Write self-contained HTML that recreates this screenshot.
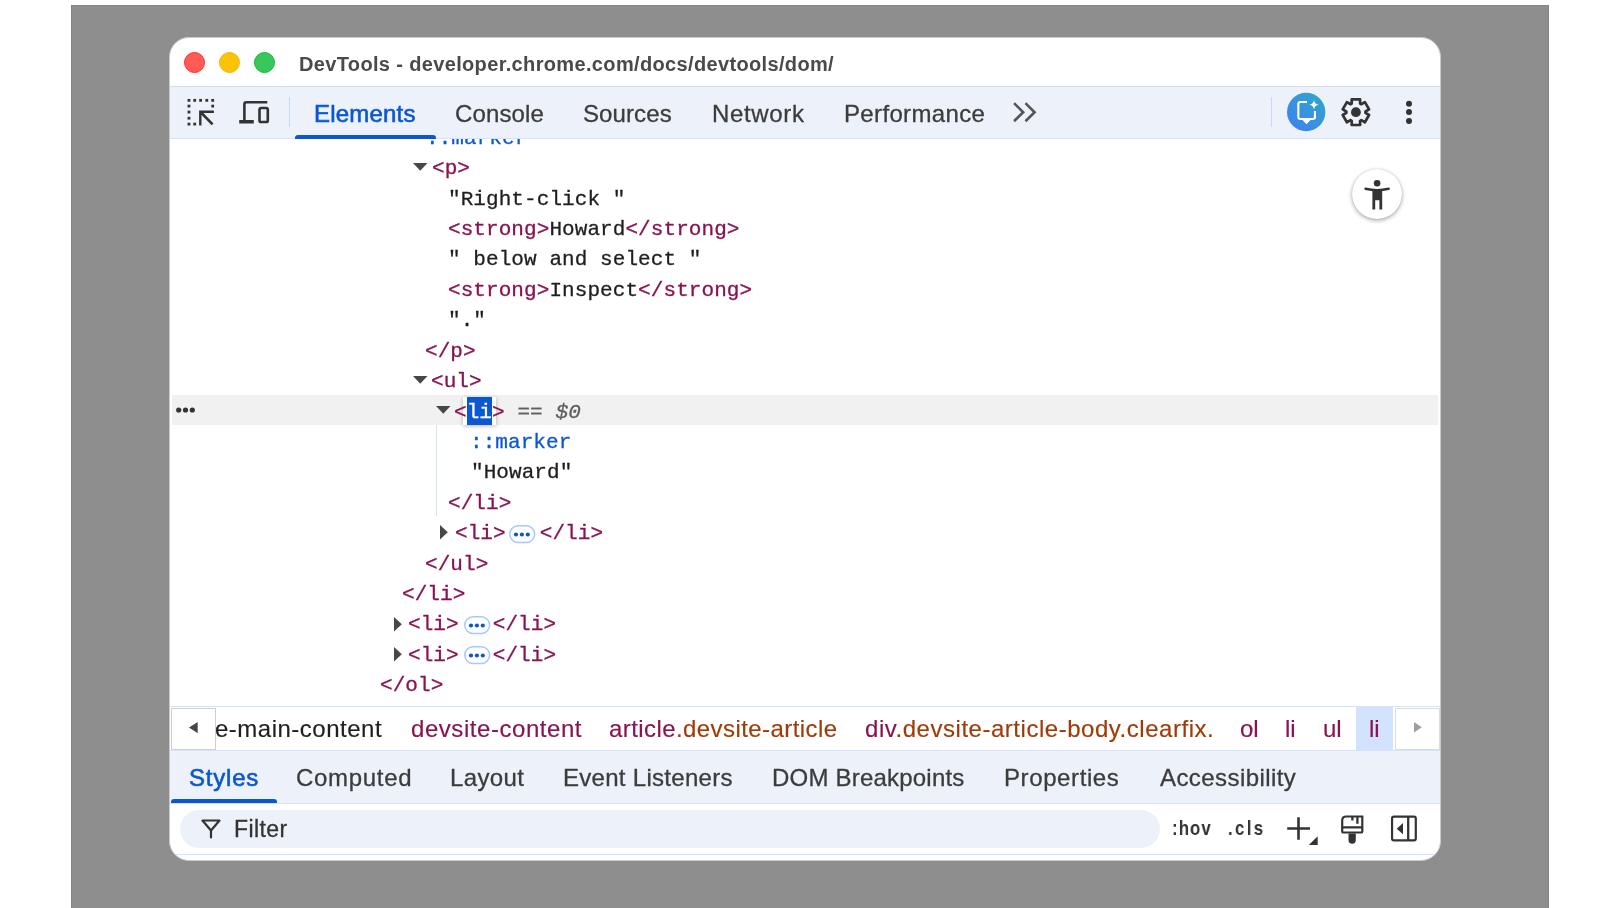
<!DOCTYPE html><html><head><meta charset="utf-8"><style>*{box-sizing:border-box;margin:0;padding:0}
html,body{width:1600px;height:908px;overflow:hidden;background:#fff;font-family:"Liberation Sans",sans-serif}
.a{position:absolute}
.t{position:absolute;white-space:pre;line-height:30px;height:30px;will-change:transform}
#bg{left:71px;top:5px;width:1478px;height:903px;background:#8e8e8e;border:1px solid #858585;border-bottom:none}
#win{left:169px;top:37px;width:1272px;height:824px;background:#fff;border:1px solid #c9c9c9;border-radius:20px}
.title{font-weight:bold;color:#4a4a4a}
.mono{font-family:"Liberation Mono",monospace;letter-spacing:0.07px;color:#1f1f1f;-webkit-text-stroke:0.3px currentColor}
.tag{color:#881350}
.blue{color:#0b57d0}
.tab{color:#3c3c3c;-webkit-text-stroke:0.3px currentColor}
.act{color:#0b57d0;-webkit-text-stroke:0.6px currentColor}
.bc{color:#881350;-webkit-text-stroke:0.15px currentColor}
.br{color:#9e3b06}
.eq{color:#5f5f5f}
.sel{color:#fff}
.pill{display:inline-block;width:34px}
.hov{font-weight:bold;color:#333}
</style></head><body>
<div id="bg" class="a"></div>
<div id="win" class="a"></div>
<div class="a" style="left:170px;top:86px;width:1270px;height:1px;background:#dcdcdc"></div>
<div class="a" style="left:170px;top:87px;width:1270px;height:51px;background:#edf2fa"></div>
<div class="a" style="left:170px;top:138px;width:1270px;height:1px;background:#d3e3fd"></div>
<div class="a" style="left:184.1px;top:51.9px;width:21.2px;height:21.2px;border-radius:50%;background:#ff5b57;border:1px solid #fe2b2b"></div>
<div class="a" style="left:219.1px;top:51.9px;width:21.2px;height:21.2px;border-radius:50%;background:#f9c306;border:1px solid #f5b800"></div>
<div class="a" style="left:254.2px;top:51.9px;width:21.2px;height:21.2px;border-radius:50%;background:#38c75a;border:1px solid #12b833"></div>
<div class="t title" style="left:299.0px;top:48.5px;font-size:20px;letter-spacing:0.35px">DevTools - developer.chrome.com/docs/devtools/dom/</div>
<div class="a" style="left:172px;top:394.5px;width:1266px;height:30.4px;background:#f1f1f1"></div>
<div class="a" style="left:463px;top:397.3px;width:33px;height:27.3px;background:#fff;box-shadow:0 1px 4px rgba(0,0,0,0.28)"></div>
<div class="a" style="left:467px;top:397px;width:25px;height:27.8px;background:#0b57d0"></div>
<div class="t mono" style="left:425.5px;top:123.7px;font-size:21px;"><span class="blue">::marker</span></div>
<div class="t mono" style="left:432.0px;top:154.1px;font-size:21px;"><span class="tag">&lt;p&gt;</span></div>
<div class="t mono" style="left:447.5px;top:184.5px;font-size:21px;">"Right-click "</div>
<div class="t mono" style="left:447.5px;top:214.9px;font-size:21px;"><span class="tag">&lt;strong&gt;</span>Howard<span class="tag">&lt;/strong&gt;</span></div>
<div class="t mono" style="left:447.5px;top:245.4px;font-size:21px;">" below and select "</div>
<div class="t mono" style="left:447.5px;top:275.8px;font-size:21px;"><span class="tag">&lt;strong&gt;</span>Inspect<span class="tag">&lt;/strong&gt;</span></div>
<div class="t mono" style="left:447.5px;top:306.2px;font-size:21px;">"."</div>
<div class="t mono" style="left:425.0px;top:336.6px;font-size:21px;"><span class="tag">&lt;/p&gt;</span></div>
<div class="t mono" style="left:430.5px;top:367.0px;font-size:21px;"><span class="tag">&lt;ul&gt;</span></div>
<div class="t mono" style="left:453.5px;top:397.5px;font-size:21px;"><span class="tag">&lt;<span class="sel">li</span>&gt;</span> <span class="eq">==</span> <span class="eq"><i>$0</i></span></div>
<div class="t mono" style="left:469.5px;top:427.9px;font-size:21px;"><span class="blue">::marker</span></div>
<div class="t mono" style="left:471.0px;top:458.3px;font-size:21px;">"Howard"</div>
<div class="t mono" style="left:447.5px;top:488.7px;font-size:21px;"><span class="tag">&lt;/li&gt;</span></div>
<div class="t mono" style="left:454.5px;top:519.1px;font-size:21px;"><span class="tag">&lt;li&gt;</span><span class="pill"></span><span class="tag">&lt;/li&gt;</span></div>
<div class="t mono" style="left:425.0px;top:549.6px;font-size:21px;"><span class="tag">&lt;/ul&gt;</span></div>
<div class="t mono" style="left:402.0px;top:580.0px;font-size:21px;"><span class="tag">&lt;/li&gt;</span></div>
<div class="t mono" style="left:408.0px;top:610.4px;font-size:21px;"><span class="tag">&lt;li&gt;</span><span class="pill"></span><span class="tag">&lt;/li&gt;</span></div>
<div class="t mono" style="left:408.0px;top:640.8px;font-size:21px;"><span class="tag">&lt;li&gt;</span><span class="pill"></span><span class="tag">&lt;/li&gt;</span></div>
<div class="t mono" style="left:379.5px;top:671.2px;font-size:21px;"><span class="tag">&lt;/ol&gt;</span></div>
<svg class="a" style="left:413.3px;top:162.5px" width="15" height="8"><path d="M0 0H14.5L7.25 7.8Z" fill="#474747"/></svg>
<svg class="a" style="left:413.3px;top:376.2px" width="15" height="8"><path d="M0 0H14.5L7.25 7.8Z" fill="#474747"/></svg>
<svg class="a" style="left:436.2px;top:406px" width="15" height="8"><path d="M0 0H14.5L7.25 7.8Z" fill="#474747"/></svg>
<svg class="a" style="left:439.5px;top:525px" width="8" height="15"><path d="M0 0V14.5L7.8 7.25Z" fill="#474747"/></svg>
<svg class="a" style="left:393.6px;top:616.5px" width="8" height="15"><path d="M0 0V14.5L7.8 7.25Z" fill="#474747"/></svg>
<svg class="a" style="left:393.6px;top:647px" width="8" height="15"><path d="M0 0V14.5L7.8 7.25Z" fill="#474747"/></svg>
<div class="a" style="left:436px;top:425px;width:1px;height:91px;background:#d3e3fd"></div>
<svg class="a" style="left:175px;top:406px" width="22" height="8"><circle cx="3.7" cy="4" r="2.6" fill="#333"/><circle cx="10.5" cy="4" r="2.6" fill="#333"/><circle cx="17.3" cy="4" r="2.6" fill="#333"/></svg>
<div class="a" style="left:170px;top:706px;width:1270px;height:1px;background:#d3e3fd"></div>
<div class="a" style="left:170px;top:750px;width:1270px;height:1px;background:#d3e3fd"></div>
<div class="a" style="left:1356px;top:707px;width:37px;height:43px;background:#d3e3fd"></div>
<div class="t bc" style="left:214.5px;top:713.7px;font-size:24px;color:#1f1f1f;letter-spacing:0.5px">e-main-content</div>
<div class="t bc" style="left:410.5px;top:713.7px;font-size:24px;letter-spacing:0.55px">devsite-content</div>
<div class="t bc" style="left:608.5px;top:713.7px;font-size:24px;letter-spacing:0.42px">article<span class="br">.devsite-article</span></div>
<div class="t bc" style="left:864.5px;top:713.7px;font-size:24px;letter-spacing:0.53px">div<span class="br">.devsite-article-body.clearfix.</span></div>
<div class="t bc" style="left:1239.5px;top:713.7px;font-size:24px;">ol</div>
<div class="t bc" style="left:1285.0px;top:713.7px;font-size:24px;">li</div>
<div class="t bc" style="left:1323.0px;top:713.7px;font-size:24px;">ul</div>
<div class="t bc" style="left:1369.0px;top:713.7px;font-size:24px;">li</div>
<div class="a" style="left:171px;top:708px;width:45px;height:42px;background:#fff;border:1px solid #cfcfcf"></div>
<svg class="a" style="left:189px;top:722px" width="9" height="12"><path d="M8.7 0V11.2L0 5.6Z" fill="#474747"/></svg>
<div class="a" style="left:1395px;top:708px;width:45px;height:42px;background:#fff;border:1px solid #dcdcdc"></div>
<svg class="a" style="left:1414px;top:722px" width="9" height="12"><path d="M0 0V10.5L7.8 5.25Z" fill="#9e9e9e"/></svg>
<div class="a" style="left:170px;top:751px;width:1270px;height:52px;background:#edf2fa"></div>
<div class="a" style="left:170px;top:803px;width:1270px;height:1px;background:#d3e3fd"></div>
<div class="t tab act" style="left:189.0px;top:763.2px;font-size:24px;letter-spacing:0.8px">Styles</div>
<div class="t tab" style="left:296.0px;top:763.2px;font-size:24px;letter-spacing:0.7px">Computed</div>
<div class="t tab" style="left:449.5px;top:763.2px;font-size:24px;letter-spacing:0.35px">Layout</div>
<div class="t tab" style="left:562.5px;top:763.2px;font-size:24px;letter-spacing:0.29px">Event Listeners</div>
<div class="t tab" style="left:771.5px;top:763.2px;font-size:24px;letter-spacing:0.21px">DOM Breakpoints</div>
<div class="t tab" style="left:1003.5px;top:763.2px;font-size:24px;letter-spacing:0.6px">Properties</div>
<div class="t tab" style="left:1159.5px;top:763.2px;font-size:24px;letter-spacing:0.42px">Accessibility</div>
<div class="a" style="left:171px;top:799px;width:106px;height:4px;background:#0b57d0;border-radius:3px 3px 0 0"></div>
<div class="a" style="left:180px;top:810px;width:980px;height:37.5px;background:#edf2fa;border-radius:19px"></div>
<div class="a" style="left:176px;top:854px;width:1258px;height:1px;background:#d3e3fd"></div>
<div class="t tab" style="left:233.5px;top:814.0px;font-size:23px;color:#333;letter-spacing:0.4px">Filter</div>
<svg class="a" style="left:200px;top:818px" width="22" height="22"><path d="M2.5 2.5H19.5L11 12.5V19.5" fill="none" stroke="#333" stroke-width="2.2" stroke-linejoin="round" stroke-linecap="round"/><path d="M2.5 2.5L11 12.5" stroke="#333" stroke-width="2.2" fill="none"/></svg>
<div class="t hov" style="left:1172.0px;top:813.2px;font-size:21px;letter-spacing:1.4px;transform:scaleX(0.8);transform-origin:0 0">:hov</div>
<div class="t hov" style="left:1227.5px;top:813.2px;font-size:21px;letter-spacing:3px;transform:scaleX(0.8);transform-origin:0 0">.cls</div>
<div class="a" style="left:170px;top:86px;width:1270px;height:1px;background:#dcdcdc"></div>
<div class="a" style="left:170px;top:87px;width:1270px;height:51px;background:#edf2fa"></div>
<div class="a" style="left:170px;top:138px;width:1270px;height:1px;background:#d3e3fd"></div>
<div class="t tab act" style="left:313.5px;top:98.7px;font-size:24px;letter-spacing:0.2px">Elements</div>
<div class="t tab" style="left:454.5px;top:98.7px;font-size:24px;letter-spacing:0.13px">Console</div>
<div class="t tab" style="left:582.5px;top:98.7px;font-size:24px;letter-spacing:0.1px">Sources</div>
<div class="t tab" style="left:712.0px;top:98.7px;font-size:24px;letter-spacing:0.65px">Network</div>
<div class="t tab" style="left:844.0px;top:98.7px;font-size:24px;letter-spacing:0.35px">Performance</div>
<div class="a" style="left:294.5px;top:135px;width:141px;height:4px;background:#0b57d0;border-radius:3px 3px 0 0"></div>
<div class="a" style="left:289px;top:97px;width:1.2px;height:30px;background:#c7d8f5"></div>
<div class="a" style="left:1270.6px;top:97px;width:1.2px;height:30px;background:#c7d8f5"></div>
<svg class="a" style="left:183px;top:95px;overflow:visible" width="36" height="36" viewBox="0 0 36 36"><rect x="4.55" y="3.95" width="2.8" height="2.8" fill="#333"/><rect x="10.30" y="3.95" width="2.8" height="2.8" fill="#333"/><rect x="16.20" y="3.95" width="2.8" height="2.8" fill="#333"/><rect x="22.40" y="3.95" width="2.8" height="2.8" fill="#333"/><rect x="28.30" y="3.95" width="2.8" height="2.8" fill="#333"/><rect x="4.55" y="9.70" width="2.8" height="2.8" fill="#333"/><rect x="4.55" y="15.65" width="2.8" height="2.8" fill="#333"/><rect x="4.55" y="21.80" width="2.8" height="2.8" fill="#333"/><rect x="4.55" y="27.70" width="2.8" height="2.8" fill="#333"/><rect x="28.30" y="9.70" width="2.8" height="2.8" fill="#333"/><rect x="10.30" y="27.70" width="2.8" height="2.8" fill="#333"/><path d="M30.9 16.75H17.3V30.5" fill="none" stroke="#333" stroke-width="2.4"/><path d="M18 17.5L29.6 29.4" fill="none" stroke="#333" stroke-width="2.6"/></svg>
<svg class="a" style="left:235px;top:95px;overflow:visible" width="40" height="36" viewBox="0 0 40 36"><path d="M32.3 7.2H11.4Q9.4 7.2 9.4 9.2V25.5" fill="none" stroke="#333" stroke-width="2.6"/><rect x="4.2" y="25" width="14.6" height="3.5" fill="#333"/><rect x="24.5" y="13" width="8.3" height="14.05" rx="1.6" fill="none" stroke="#333" stroke-width="2.6"/></svg>
<svg class="a" style="left:1006px;top:96px;overflow:visible" width="36" height="34" viewBox="0 0 36 34"><path d="M9 8.05L17.2 16.3L9 24.3M20.4 8.05L28.6 16.3L20.4 24.3" fill="none" stroke="#555" stroke-width="2.6" stroke-linecap="square"/></svg>
<svg class="a" style="left:1287px;top:93px;overflow:visible" width="39" height="39" viewBox="0 0 39 39"><defs><linearGradient id="g1" x1="0" y1="1" x2="1" y2="0"><stop offset="0" stop-color="#3f7ef8"/><stop offset="1" stop-color="#2fa9c2"/></linearGradient></defs><circle cx="19.2" cy="19" r="19.2" fill="url(#g1)"/><path d="M20 9.05H13.35Q11.35 9.05 11.35 11.05V23.95Q11.35 25.95 13.35 25.95H25.95Q27.95 25.95 27.95 23.95V18" fill="none" stroke="#fff" stroke-width="2.1"/><path d="M15 26.5H24L19.5 31.2Z" fill="#fff"/><path d="M27 6.9Q27.5 11.2 31.8 11.7Q27.5 12.2 27 16.5Q26.5 12.2 22.2 11.7Q26.5 11.2 27 6.9Z" fill="#fff"/></svg>
<svg class="a" style="left:1336px;top:94px;overflow:visible" width="40" height="36" viewBox="0 0 40 36"><path d="M24.10 9.57L24.10 5.40L15.70 5.40L15.70 9.57L14.52 10.25L10.91 8.16L6.71 15.44L10.32 17.52L10.32 18.88L6.71 20.96L10.91 28.24L14.52 26.15L15.70 26.83L15.70 31.00L24.10 31.00L24.10 26.83L25.28 26.15L28.89 28.24L33.09 20.96L29.48 18.88L29.48 17.52L33.09 15.44L28.89 8.16L25.28 10.25Z" fill="none" stroke="#333" stroke-width="2.7" stroke-linejoin="round"/><circle cx="19.9" cy="18.2" r="4.9" fill="#333"/></svg>
<svg class="a" style="left:1405.4px;top:100px;overflow:visible" width="8" height="25" viewBox="0 0 8 25"><circle cx="4" cy="3.8" r="3" fill="#333"/><circle cx="4" cy="12.1" r="3" fill="#333"/><circle cx="4" cy="20.9" r="3" fill="#333"/></svg>
<div class="a" style="left:1352px;top:169.3px;width:50px;height:50px;border-radius:50%;background:#fff;box-shadow:0 1.5px 4px rgba(0,0,0,0.35),0 0 1px rgba(0,0,0,0.2)"></div>
<svg class="a" style="left:1364px;top:178.5px;overflow:visible" width="27" height="32" viewBox="0 0 27 32"><circle cx="13.1" cy="4.2" r="3.3" fill="#333"/><path d="M1.6 9.8Q13.1 12.6 24.6 9.8" fill="none" stroke="#333" stroke-width="2.6" stroke-linecap="round"/><path d="M8.4 10.6H18.2V30.5H15.4V21.2H11.2V30.5H8.4Z" fill="#333"/></svg>
<svg class="a" style="left:1284px;top:812px;overflow:visible" width="36" height="36" viewBox="0 0 36 36"><path d="M14.5 5.2V27.7M3.2 16.5H26" fill="none" stroke="#333" stroke-width="2.6"/><path d="M24.8 33.1L33.7 24.2V33.1Z" fill="#333"/></svg>
<svg class="a" style="left:1336px;top:812px;overflow:visible" width="32" height="36" viewBox="0 0 32 36"><path d="M9.3 4.5H26.3V19.4Q26.3 20.5 25.2 20.5H7.3Q6.2 20.5 6.2 19.4V8.6Q6.2 4.5 10.3 4.5Z" fill="none" stroke="#333" stroke-width="2.2"/><path d="M6.2 15.3H26.3M16.4 4.5V8.5M21.4 4.5V11.7" fill="none" stroke="#333" stroke-width="2.3"/><path d="M12.5 21.5H19.8V28.1Q19.8 31.7 16.15 31.7Q12.5 31.7 12.5 28.1Z" fill="#333"/></svg>
<svg class="a" style="left:1386px;top:812px;overflow:visible" width="36" height="36" viewBox="0 0 36 36"><rect x="6.06" y="4.67" width="23.74" height="23.73" rx="1.8" fill="none" stroke="#333" stroke-width="2.2"/><path d="M22.2 4.67V28.4" stroke="#333" stroke-width="2.3"/><path d="M17 11.1V22.2L10.7 16.65Z" fill="#333"/></svg>
<svg class="a" style="left:509.3px;top:524.5px;overflow:visible" width="27" height="19" viewBox="0 0 27 19"><rect x="0.75" y="0.75" width="24.9" height="16.7" rx="8.35" fill="#fff" stroke="#a8c7fa" stroke-width="1.5"/><circle cx="7" cy="9.5" r="2.1" fill="#0b57d0"/><circle cx="12.9" cy="9.5" r="2.1" fill="#0b57d0"/><circle cx="18.8" cy="9.5" r="2.1" fill="#0b57d0"/></svg>
<svg class="a" style="left:463.8px;top:616.0px;overflow:visible" width="27" height="19" viewBox="0 0 27 19"><rect x="0.75" y="0.75" width="24.9" height="16.7" rx="8.35" fill="#fff" stroke="#a8c7fa" stroke-width="1.5"/><circle cx="7" cy="9.5" r="2.1" fill="#0b57d0"/><circle cx="12.9" cy="9.5" r="2.1" fill="#0b57d0"/><circle cx="18.8" cy="9.5" r="2.1" fill="#0b57d0"/></svg>
<svg class="a" style="left:463.8px;top:646.4px;overflow:visible" width="27" height="19" viewBox="0 0 27 19"><rect x="0.75" y="0.75" width="24.9" height="16.7" rx="8.35" fill="#fff" stroke="#a8c7fa" stroke-width="1.5"/><circle cx="7" cy="9.5" r="2.1" fill="#0b57d0"/><circle cx="12.9" cy="9.5" r="2.1" fill="#0b57d0"/><circle cx="18.8" cy="9.5" r="2.1" fill="#0b57d0"/></svg>
</body></html>
